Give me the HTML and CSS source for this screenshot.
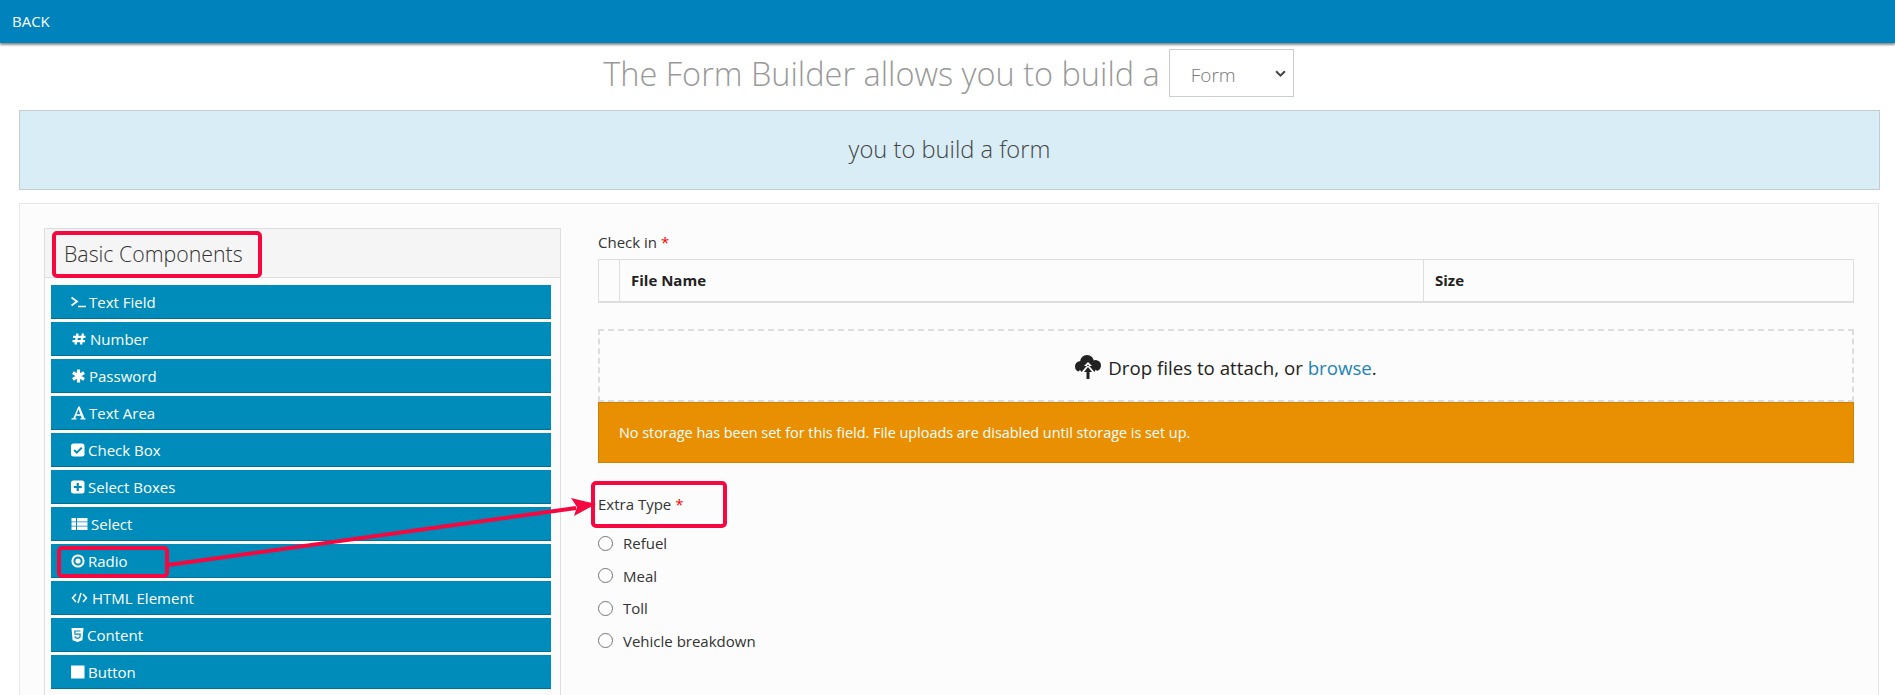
FILE: index.html
```html
<!DOCTYPE html>
<html lang="en">

<head>
    <meta charset="UTF-8">
    <title>Form Builder</title>
    <link rel="stylesheet" href="styles.css">
</head>

<body>
    <div class="topbar"><a class="back">BACK</a></div>

    <div class="title">
        <span>The Form Builder allows you to build a</span>
        <div class="type-select">Form
            <svg class="chevron" viewBox="0 0 10 7"><path d="M1 1l4 4 4-4" fill="none" stroke="#444" stroke-width="1.8"/></svg>
        </div>
    </div>

    <div class="info-box">you to build a form</div>

    <div class="builder">
        <div class="sidebar">
            <div class="sidebar-head">Basic Components</div>
            <div class="sidebar-list">
                <div class="comp">
                    <svg class="ico ico-15" viewBox="0 0 15 14"><path d="M.5 2.500L6 6.500.5 10.500" fill="none" stroke="#fff" stroke-width="1.800"/><path d="M7 11.500h8" stroke="#fff" stroke-width="1.500"/></svg>
                    Text Field
                </div>
                <div class="comp">
                    <svg class="ico ico-16" viewBox="0 0 14 14"><path d="M5.500 1.500L3.500 12.500M11 1.500L9 12.500M1 4.800h12.500M.5 9.200H13" fill="none" stroke="#fff" stroke-width="2.300"/></svg>
                    Number
                </div>
                <div class="comp">
                    <svg class="ico ico-15" viewBox="0 0 14 14"><path d="M7 .5v13M1.400 3.700l11.200 6.600M12.600 3.700L1.400 10.300" fill="none" stroke="#fff" stroke-width="3.200"/></svg>
                    Password
                </div>
                <div class="comp">
                    <svg class="ico ico-15" viewBox="0 0 14 14"><path d="M0 13.500h5v-1.300H3.700l.9-2.400h4.800l.9 2.400H9v1.300h5v-1.300h-1L8.200 .5H6.800L1.800 12.200H0zM5.100 8.300L7 3.400l1.900 4.900z" fill="#fff"/></svg>
                    Text Area
                </div>
                <div class="comp">
                    <svg class="ico" viewBox="0 0 14 14"><rect x="0" y="0.500" width="13.500" height="13" rx="2.500" fill="#fff"/><path d="M3.200 7l2.600 2.600 5-5" fill="none" stroke="#008cba" stroke-width="2"/></svg>
                    Check Box
                </div>
                <div class="comp">
                    <svg class="ico" viewBox="0 0 14 14"><rect x="0" y="0.500" width="13.500" height="13" rx="2.500" fill="#fff"/><path d="M6.750 3v8M2.800 7h8" fill="none" stroke="#008cba" stroke-width="2.200"/></svg>
                    Select Boxes
                </div>
                <div class="comp">
                    <svg class="ico ico-wide" viewBox="0 0 16 12"><path d="M0 0h4.500v3.500H0zM5.500 0H16v3.500H5.500zM0 4.300h4.500v3.400H0zM5.500 4.300H16v3.400H5.500zM0 8.500h4.500V12H0zM5.500 8.500H16V12H5.500z" fill="#fff"/></svg>
                    Select
                </div>
                <div class="comp">
                    <svg class="ico" viewBox="0 0 14 14"><circle cx="7" cy="7" r="5.600" fill="none" stroke="#fff" stroke-width="2"/><circle cx="7" cy="7" r="2.600" fill="#fff"/></svg>
                    Radio
                </div>
                <div class="comp">
                    <svg class="ico ico-wide ico-code" viewBox="0 0 16 12"><path d="M4.500 2L1 6l3.500 4M11.500 2L15 6l-3.500 4M9.500 1L6.500 11" fill="none" stroke="#fff" stroke-width="1.500"/></svg>
                    HTML Element
                </div>
                <div class="comp">
                    <svg class="ico ico-narrow" viewBox="0 0 12 14"><path d="M0 0h12l-1.100 12.300L6 14l-4.900-1.700z" fill="#fff"/><path d="M9 3H3.300l.2 3.200h5.200l-.3 3.300L6 10.400l-2.300-.8-.1-1.400" fill="none" stroke="#008cba" stroke-width="1.200"/></svg>
                    Content
                </div>
                <div class="comp">
                    <svg class="ico" viewBox="0 0 14 14"><rect x="0" y="0.500" width="13.500" height="13" fill="#fff"/></svg>
                    Button
                </div>
            </div>
        </div>

        <div class="preview">
            <div class="field-label">Check in <span class="req">*</span></div>
            <div class="file-table">
                <div class="cell-blank"></div>
                <div class="cell-name">File Name</div>
                <div class="cell-size">Size</div>
            </div>
            <div class="dropzone">
                <svg class="cloud" viewBox="0 0 26 24">
                    <circle cx="5.500" cy="11.500" r="5.500" fill="#222"/>
                    <circle cx="12" cy="7" r="7" fill="#222"/>
                    <circle cx="20.500" cy="10.500" r="5.500" fill="#222"/>
                    <path d="M13 7L0 20v4h26v-4z" fill="#fcfcfc"/>
                    <path d="M5 11h16v3l-1.500 3L13 9.500 6.500 17 5 15z" fill="#222"/>
                    <path d="M13 12l4 5h-2.500v7h-3v-7H9z" fill="#222"/>
                </svg>
                <span class="drop-text">Drop files to attach, or <a class="browse">browse</a>.</span>
            </div>
            <div class="warning">No storage has been set for this field. File uploads are disabled until storage is set up.</div>

            <div class="field-label extra-label">Extra Type <span class="req">*</span></div>
            <div class="radio-row"><span class="radio"></span>Refuel</div>
            <div class="radio-row"><span class="radio"></span>Meal</div>
            <div class="radio-row"><span class="radio"></span>Toll</div>
            <div class="radio-row"><span class="radio"></span>Vehicle breakdown</div>
        </div>
    </div>

    <!-- annotations drawn over the screenshot -->
    <div class="mark mark-head"></div>
    <div class="mark mark-radio"></div>
    <div class="mark mark-extra"></div>
    <svg class="arrow" viewBox="0 0 1895 695">
        <path d="M168 565L576 508" fill="none" stroke="#f5073f" stroke-width="4"/>
        <path d="M571 498L596 504L574 516L577 507z" fill="#f5073f"/>
    </svg>
</body>

</html>
```

FILE: styles.css
```css
html, body {
    height: 695px;
    overflow: hidden;
}
body {
    margin: 0;
    background-color: #fff;
    font-family: 'Open Sans', sans-serif;
    font-size: 15px;
    color: #222;
}

.topbar {
    height: 43px;
    background-color: #0083bd;
    box-shadow: 0 2px 2px rgba(0, 0, 0, .45);
    display: flex;
    align-items: center;
    padding-left: 12px;
    padding-bottom: 2px;
    box-sizing: border-box;
    position: relative;
}
.back {
    color: #fff;
    font-size: 15px;
}

.title {
    height: 67px;
    display: flex;
    justify-content: center;
    align-items: flex-start;
    gap: 9px;
    padding-left: 2px;
    font-size: 32.500px;
    font-weight: 300;
    color: #999;
}
.title span {
    margin-top: 8px;
    line-height: 46px;
}
.type-select {
    margin-top: 6px;
    width: 125px;
    height: 48px;
    box-sizing: border-box;
    border: 1px solid #ccc;
    font-size: 19px;
    line-height: 50px;
    padding-left: 21px;
    position: relative;
    color: #777;
}
.chevron {
    width: 11px;
    height: 8px;
    position: absolute;
    right: 7px;
    top: 20px;
}

.info-box {
    margin: 0 15px 0 19px;
    height: 80px;
    box-sizing: border-box;
    background-color: #d9edf7;
    border: 1px solid #c4ccd0;
    display: flex;
    align-items: center;
    justify-content: center;
    font-size: 23.700px;
    font-weight: 300;
    color: #444;
    padding-bottom: 2px;
}

.builder {
    margin: 13px 16px 0 19px;
    height: 500px;
    box-sizing: border-box;
    background-color: #fcfcfc;
    border: 1px solid #e6e6e6;
    padding: 24px 24px 0 24px;
    display: flex;
    gap: 37px;
}

.sidebar {
    width: 517px;
    flex: none;
    border: 1px solid #ddd;
    box-sizing: border-box;
}
.sidebar-head {
    height: 48px;
    background-color: #f5f5f5;
    border-bottom: 1px solid #ddd;
    font-size: 21.300px;
    font-weight: 300;
    line-height: 50px;
    padding-left: 19px;
    color: #333;
}
.sidebar-list {
    padding: 7px 9px 0 6px;
    display: flex;
    flex-direction: column;
    gap: 3px;
}
.comp {
    height: 34px;
    box-sizing: border-box;
    background-color: #008cba;
    border-bottom: 1px solid #007095;
    color: #fff;
    font-size: 15px;
    display: flex;
    align-items: center;
    gap: 3px;
    padding-left: 20px;
}
.ico {
    width: 14px;
    height: 14px;
    flex: none;
}
.ico-15 {
    width: 15px;
}
.ico-16 {
    width: 16px;
}
.ico-wide {
    width: 17px;
    height: 12px;
}
.ico-code {
    margin-right: 1px;
}
.ico-narrow {
    width: 13px;
}

.preview {
    flex: 1;
}
.field-label {
    margin-top: 2px;
    line-height: 24px;
    color: #333;
}
.req {
    color: #f00;
}
.file-table {
    margin-top: 5px;
    height: 44px;
    box-sizing: border-box;
    border: 1px solid #ddd;
    border-bottom-width: 2px;
    display: grid;
    grid-template-columns: 20px 804px 1fr;
    font-weight: 700;
    line-height: 41px;
}
.cell-name, .cell-size {
    border-left: 1px solid #ddd;
    padding-left: 11px;
}
.dropzone {
    margin-top: 26px;
    height: 73px;
    box-sizing: border-box;
    border: 2px dashed #ddd;
    padding-top: 2px;
    display: flex;
    align-items: center;
    justify-content: center;
    gap: 7px;
    font-size: 18.700px;
}
.drop-text {
    margin-top: 2px;
}
.cloud {
    width: 26px;
    height: 24px;
}
.browse {
    color: #2184b8;
}
.warning {
    height: 61px;
    box-sizing: border-box;
    background-color: #e99002;
    border: 1px solid #d08002;
    color: #fff;
    font-size: 14.400px;
    padding-left: 20px;
    display: flex;
    align-items: center;
}
.extra-label {
    margin-top: 29px;
    margin-bottom: 11px;
}
.radio-row {
    height: 32.500px;
    display: flex;
    align-items: center;
    gap: 10px;
    color: #333;
}
.radio {
    width: 15px;
    height: 15px;
    box-sizing: border-box;
    border: 1px solid #767676;
    border-radius: 50%;
    background-color: #fff;
}

.mark {
    position: absolute;
    box-sizing: border-box;
    border: 4px solid #f5073f;
    border-radius: 5px;
}
.mark-head {
    left: 52px;
    top: 231px;
    width: 210px;
    height: 47px;
}
.mark-radio {
    left: 57px;
    top: 546px;
    width: 112px;
    height: 32px;
}
.mark-extra {
    left: 591px;
    top: 481px;
    width: 136px;
    height: 47px;
}
.arrow {
    position: absolute;
    left: 0;
    top: 0;
    width: 1895px;
    height: 695px;
    pointer-events: none;
}
```
